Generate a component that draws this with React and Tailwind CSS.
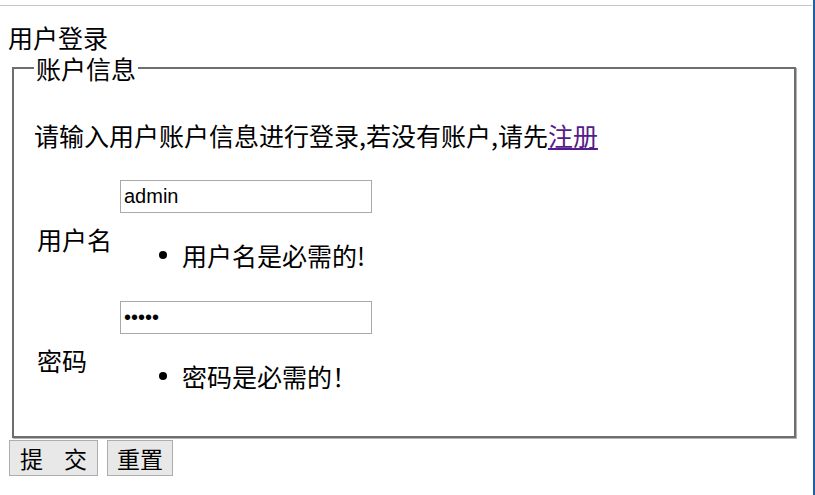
import { useState } from "react";

export default function App() {
  const [username, setUsername] = useState("admin");
  const [password, setPassword] = useState("12345");

  return (
    <div
      className="flex min-h-[495px] w-[815px] bg-white text-black"
      style={{ fontFamily: '"Noto Sans CJK SC", "Liberation Sans", sans-serif' }}
    >
      <div className="w-[813px]">
        <div className="mt-[5px] h-px w-[812px] bg-[#c4c4c4]" />

        <div className="mt-[16px] pl-[8px] text-[25px] leading-[30px]">用户登录</div>

        <form onSubmit={(e) => e.preventDefault()}>
          <fieldset className="mt-[1px] ml-[12px] w-[784px] border-2 border-[#6e6e6e] px-[20px] pb-[18px] shadow-[1px_1px_0_0_#b4b4b4]">
            <legend className="px-[2px] text-[25px] leading-[30px]">账户信息</legend>

            <p className="mt-[37px] text-[25px] leading-[30px]">
              请输入用户账户信息进行登录,若没有账户,请先
              <a href="#register" className="text-[#551a8b] underline">
                注册
              </a>
            </p>

            {/* username row */}
            <div className="mt-[30px] flex items-center">
              <label className="w-[86px] pl-[3px] text-[25px] leading-[30px]">用户名</label>
              <div className="flex flex-col">
                <input
                  type="text"
                  value={username}
                  onChange={(e) => setUsername(e.target.value)}
                  className="h-[33px] w-[252px] border border-[#a9a9a9] px-[3px] text-[20px] outline-none"
                  style={{ fontFamily: '"Liberation Sans", Arial, sans-serif' }}
                />
                <ul className="mt-[27px] mb-[27px]">
                  <li className="flex h-[30px] items-center text-[25px] leading-[30px]">
                    <span className="ml-[39px] h-[8px] w-[8px] rounded-full bg-black" />
                    <span className="ml-[15px]">用户名是必需的!</span>
                  </li>
                </ul>
              </div>
            </div>

            {/* password row */}
            <div className="mt-[4px] flex items-center">
              <label className="w-[86px] pl-[3px] text-[25px] leading-[30px]">密码</label>
              <div className="flex flex-col">
                <input
                  type="password"
                  value={password}
                  onChange={(e) => setPassword(e.target.value)}
                  className="h-[33px] w-[252px] border border-[#a9a9a9] px-[3px] text-[20px] outline-none"
                  style={{ fontFamily: '"Liberation Sans", Arial, sans-serif' }}
                />
                <ul className="mt-[27px] mb-[27px]">
                  <li className="flex h-[30px] items-center text-[25px] leading-[30px]">
                    <span className="ml-[39px] h-[8px] w-[8px] rounded-full bg-black" />
                    <span className="ml-[15px]">密码是必需的！</span>
                  </li>
                </ul>
              </div>
            </div>
          </fieldset>

          <div className="mt-[2px] flex gap-[9px] pl-[9px]">
            <button
              type="submit"
              className="flex h-[36px] items-center gap-[21px] border border-[#adadad] bg-[#e8e8e8] px-[10px] text-[23px] leading-[30px]"
            >
              <span>提</span>
              <span>交</span>
            </button>
            <button
              type="reset"
              className="flex h-[36px] items-center border border-[#adadad] bg-[#e8e8e8] px-[9px] text-[23px] leading-[30px]"
            >
              重置
            </button>
          </div>
        </form>
      </div>
      <div className="w-[2px] bg-[#1f5fa6]" />
    </div>
  );
}
